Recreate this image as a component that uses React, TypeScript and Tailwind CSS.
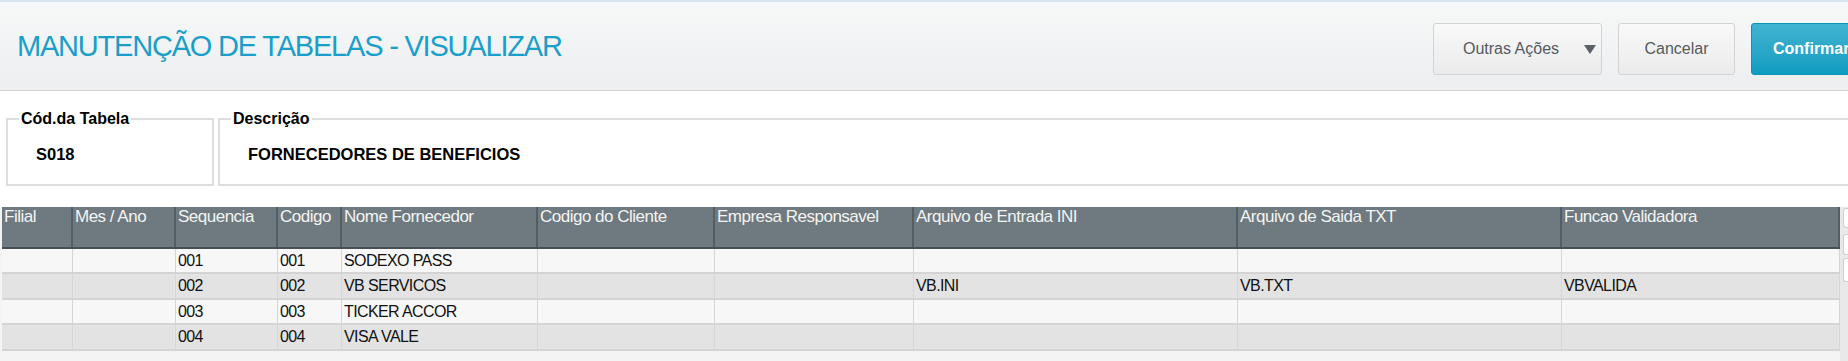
import { ReactNode } from 'react';

type Col = { label: string; w: string };

const cols: Col[] = [
  { label: 'Filial', w: 'w-[71px]' },
  { label: 'Mes / Ano', w: 'w-[103px]' },
  { label: 'Sequencia', w: 'w-[102px]' },
  { label: 'Codigo', w: 'w-[64px]' },
  { label: 'Nome Fornecedor', w: 'w-[196px]' },
  { label: 'Codigo do Cliente', w: 'w-[177px]' },
  { label: 'Empresa Responsavel', w: 'w-[199px]' },
  { label: 'Arquivo de Entrada INI', w: 'w-[324px]' },
  { label: 'Arquivo de Saida TXT', w: 'w-[324px]' },
  { label: 'Funcao Validadora', w: 'w-[278px]' },
];

const rows: { h: string; cells: string[] }[] = [
  { h: 'h-[25px]', cells: ['', '', '001', '001', 'SODEXO PASS', '', '', '', '', ''] },
  { h: 'h-[26px]', cells: ['', '', '002', '002', 'VB SERVICOS', '', '', 'VB.INI', 'VB.TXT', 'VBVALIDA'] },
  { h: 'h-[25px]', cells: ['', '', '003', '003', 'TICKER ACCOR', '', '', '', '', ''] },
  { h: 'h-[26px]', cells: ['', '', '004', '004', 'VISA VALE', '', '', '', '', ''] },
];

function Field({ label, width, children }: { label: string; width: string; children: ReactNode }) {
  return (
    <fieldset className={`${width} shrink-0 border-2 border-[#dedede]`}>
      <legend className="ml-[11px] px-[2px] text-[16px] font-bold leading-[18px] text-black">
        {label}
      </legend>
      <div className="pl-[28px] pt-[17px] pb-[21px] text-[16.5px] font-bold leading-[18px] text-black">
        {children}
      </div>
    </fieldset>
  );
}

export default function App() {
  return (
    <div className="w-[1848px] h-[361px] overflow-hidden bg-white flex flex-col font-['Liberation_Sans',Arial,sans-serif]">
      <header className="h-[91px] shrink-0 flex border-t-2 border-t-[#d9e5f0] border-b border-b-[#d6d6d6] bg-linear-to-b from-[#f7f8f8] to-[#eceef0]">
        <div className="w-[1433px] shrink-0 flex items-center pl-[17px]">
          <h1 className="text-[29px] leading-[29px] tracking-[-1.2px] text-[#1a9fcb]">
            MANUTENÇÃO DE TABELAS - VISUALIZAR
          </h1>
        </div>
        <div className="flex gap-[16px] mt-[21px] h-[52px] shrink-0">
          <button className="w-[169px] h-[52px] flex items-center pl-[29px] rounded-[3px] border border-[#d3d3d3] bg-linear-to-b from-[#f9f9f9] to-[#ebebeb] text-[16px] text-[#555a60]">
            Outras Ações
            <svg className="ml-[25px]" width="12" height="9" viewBox="0 0 12 9">
              <polygon points="0,0 12,0 6,9" fill="#5c6168" />
            </svg>
          </button>
          <button className="w-[117px] h-[52px] flex items-center justify-center rounded-[3px] border border-[#d3d3d3] bg-linear-to-b from-[#f9f9f9] to-[#ebebeb] text-[16px] text-[#555a60]">
            Cancelar
          </button>
          <button className="w-[120px] h-[52px] flex items-center pl-[21px] rounded-[3px] border border-[#0c93b6] bg-linear-to-b from-[#40b3d1] to-[#0d9cc0] text-[16px] font-bold text-white">
            Confirmar
          </button>
        </div>
      </header>

      <div className="flex gap-[4px] pl-[6px] mt-[19px] shrink-0">
        <Field label="Cód.da Tabela" width="w-[208px]">
          S018
        </Field>
        <Field label="Descrição" width="w-[1660px]">
          FORNECEDORES DE BENEFICIOS
        </Field>
      </div>

      <div className="mt-[21px] flex-1 flex">
        <div className="pl-[2px] flex flex-col bg-[#f4f4f4]">
          <div className="flex h-[42px] bg-[#6e7a7f] border-b-2 border-[#454f54]">
            {cols.map((c) => (
              <div
                key={c.label}
                className={`${c.w} shrink-0 px-[2px] pt-[1px] border-r-2 border-[#535d62] text-[17px] leading-[18px] tracking-[-0.5px] text-[#f4f4f4] whitespace-nowrap overflow-hidden`}
              >
                {c.label}
              </div>
            ))}
          </div>
          {rows.map((r, i) => (
            <div
              key={i}
              className={`flex ${r.h} border-b-2 border-[#d4d4d4] ${i % 2 === 0 ? 'bg-[#f7f7f7]' : 'bg-[#e3e3e3]'}`}
            >
              {cols.map((c, j) => (
                <div
                  key={c.label}
                  className={`${c.w} shrink-0 flex items-center px-[2px] border-r border-[#d6d6d6] text-[16px] tracking-[-0.6px] text-[#111] whitespace-nowrap overflow-hidden`}
                >
                  {r.cells[j]}
                </div>
              ))}
            </div>
          ))}
        </div>
        <div className="w-[8px] flex flex-col items-end bg-[#e9e9e9]">
          <div className="mt-[1px] h-[20px] w-[5px] bg-white border border-r-0 border-[#cfcfcf] rounded-l-[3px]" />
          <div className="mt-[6px] h-[21px] w-[5px] bg-white border border-r-0 border-[#cfcfcf] rounded-l-[3px]" />
          <div className="mt-[3px] h-[24px] w-[5px] bg-white border border-r-0 border-[#cfcfcf] rounded-l-[3px]" />
        </div>
      </div>
    </div>
  );
}
